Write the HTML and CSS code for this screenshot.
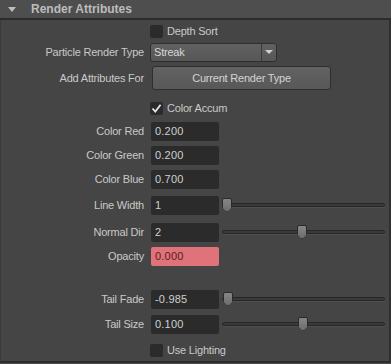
FILE: index.html
```html
<!DOCTYPE html>
<html lang="en">

<head>
  <meta charset="UTF-8">
  <title>Render Attributes</title>
  <link rel="stylesheet" href="styles.css">
</head>

<body>
  <div class="header">
    <span class="arrow"></span>
    <span class="title">Render Attributes</span>
  </div>

  <div class="panel">
    <div class="row r-depth">
      <span class="label"></span>
      <span class="check"></span>
      <span class="check-text">Depth Sort</span>
    </div>

    <div class="row r-type">
      <span class="label">Particle Render Type</span>
      <div class="select">
        <span class="select-text">Streak</span>
        <span class="select-btn"><span class="tri"></span></span>
      </div>
    </div>

    <div class="row r-add">
      <span class="label">Add Attributes For</span>
      <button class="btn">Current Render Type</button>
    </div>

    <div class="row r-accum">
      <span class="label"></span>
      <span class="check on">
        <svg width="11" height="11" viewBox="0 0 11 11"><path d="M1.5 5.5 L4.3 8.6 L9.6 1.8" fill="none" stroke="#e6e6e6" stroke-width="1.8"/></svg>
      </span>
      <span class="check-text">Color Accum</span>
    </div>

    <div class="row r-red">
      <span class="label">Color Red</span>
      <span class="field">0.200</span>
    </div>

    <div class="row r-green">
      <span class="label">Color Green</span>
      <span class="field">0.200</span>
    </div>

    <div class="row r-blue">
      <span class="label">Color Blue</span>
      <span class="field">0.700</span>
    </div>

    <div class="row r-line">
      <span class="label">Line Width</span>
      <span class="field">1</span>
      <div class="slider">
        <div class="track"></div>
        <span class="thumb" style="left: 0px"></span>
      </div>
    </div>

    <div class="row r-normal">
      <span class="label">Normal Dir</span>
      <span class="field">2</span>
      <div class="slider">
        <div class="track"></div>
        <span class="thumb" style="left: 75px"></span>
      </div>
    </div>

    <div class="row r-opacity">
      <span class="label">Opacity</span>
      <span class="field warn">0.000</span>
    </div>

    <div class="row r-fade">
      <span class="label">Tail Fade</span>
      <span class="field">-0.985</span>
      <div class="slider">
        <div class="track"></div>
        <span class="thumb" style="left: 1px"></span>
      </div>
    </div>

    <div class="row r-size">
      <span class="label">Tail Size</span>
      <span class="field">0.100</span>
      <div class="slider">
        <div class="track"></div>
        <span class="thumb" style="left: 76px"></span>
      </div>
    </div>

    <div class="row r-light">
      <span class="label"></span>
      <span class="check"></span>
      <span class="check-text">Use Lighting</span>
    </div>
  </div>
</body>

</html>
```

FILE: styles.css
```css
html, body {
  margin: 0;
  padding: 0;
  background: #4d4d4d;
}
body {
  width: 391px;
  height: 364px;
  overflow: hidden;
  font-family: "Liberation Sans", Arial, sans-serif;
  font-size: 11px;
  letter-spacing: -0.2px;
  color: #c9c9c9;
}
.header {
  height: 18px;
  display: flex;
  align-items: center;
  background: #4e4e4e;
  border-bottom: 2px solid #2c2c2c;
}
.arrow {
  width: 0;
  height: 0;
  margin-left: 8px;
  border-left: 4px solid transparent;
  border-right: 4px solid transparent;
  border-top: 5px solid #bdbdbd;
}
.title {
  margin-left: 15px;
  font-weight: bold;
  font-size: 12px;
  letter-spacing: 0;
  color: #bcbcbc;
}
.panel {
  background: #454545;
  border-left: 1px solid #3a3a3a;
  border-right: 2px solid #2f2f2f;
  border-bottom: 2px solid #2c2c2c;
  box-sizing: border-box;
  height: 343px;
  padding-top: 2px;
}
.row {
  display: flex;
  align-items: center;
  height: 20px;
}
.label {
  width: 143px;
  flex: none;
  text-align: right;
  padding-right: 4px;
  white-space: nowrap;
}
.r-depth { height: 18px; }
.r-type { margin-top: 2px; }
.r-add { margin-top: 4px; height: 24px; }
.r-accum { margin-top: 9px; height: 18px; }
.r-red { margin-top: 4px; }
.r-green { margin-top: 4px; }
.r-blue { margin-top: 4px; }
.r-line { margin-top: 6px; }
.r-normal { margin-top: 7px; }
.r-opacity { margin-top: 4px; }
.r-fade { margin-top: 23px; }
.r-size { margin-top: 5px; }
.r-light { margin-top: 7px; height: 18px; }

.check {
  width: 13px;
  height: 13px;
  margin-left: 2px;
  background: #2b2b2b;
  border-radius: 2px;
  display: flex;
  align-items: center;
  justify-content: center;
}
.check-text {
  margin-left: 4px;
}
.select {
  margin-left: 2px;
  width: 127px;
  height: 19px;
  box-sizing: border-box;
  display: flex;
  background: linear-gradient(#616161, #575757);
  border: 1px solid #2f2f2f;
  border-radius: 3px;
}
.select-text {
  flex: 1;
  padding-left: 3px;
  line-height: 17px;
  color: #d6d6d6;
}
.select-btn {
  width: 14px;
  border-left: 1px solid #3a3a3a;
  display: flex;
  align-items: center;
  justify-content: center;
}
.tri {
  width: 0;
  height: 0;
  border-left: 4px solid transparent;
  border-right: 4px solid transparent;
  border-top: 4px solid #cfcfcf;
}
.btn {
  margin-left: 4px;
  width: 179px;
  height: 24px;
  padding: 0;
  font: inherit;
  letter-spacing: inherit;
  color: #d4d4d4;
  background: linear-gradient(#626262, #585858);
  border: 1px solid #2e2e2e;
  border-radius: 3px;
}
.field {
  margin-left: 3px;
  width: 68px;
  height: 19px;
  flex: none;
  box-sizing: border-box;
  padding-left: 4px;
  line-height: 19px;
  background: #2b2b2b;
  border-radius: 2px;
  color: #d0d0d0;
  letter-spacing: 0.2px;
}
.field.warn {
  background: #e0727a;
  color: #5b1c20;
}
.slider {
  position: relative;
  flex: 1;
  height: 16px;
  margin-left: 3px;
  margin-right: 4px;
  display: flex;
  align-items: center;
}
.track {
  flex: 1;
  height: 4px;
  box-sizing: border-box;
  background: #3a3a3a;
  border: 1px solid #262626;
  border-radius: 2px;
  box-shadow: 0 1px 0 #505050;
}
.thumb {
  position: absolute;
  top: 1px;
  width: 10px;
  height: 14px;
  box-sizing: border-box;
  background: linear-gradient(#858585, #6e6e6e);
  border: 1px solid #2a2a2a;
  clip-path: polygon(0 0, 100% 0, 100% 65%, 50% 100%, 0 65%);
  border-radius: 2px 2px 0 0;
}
```
